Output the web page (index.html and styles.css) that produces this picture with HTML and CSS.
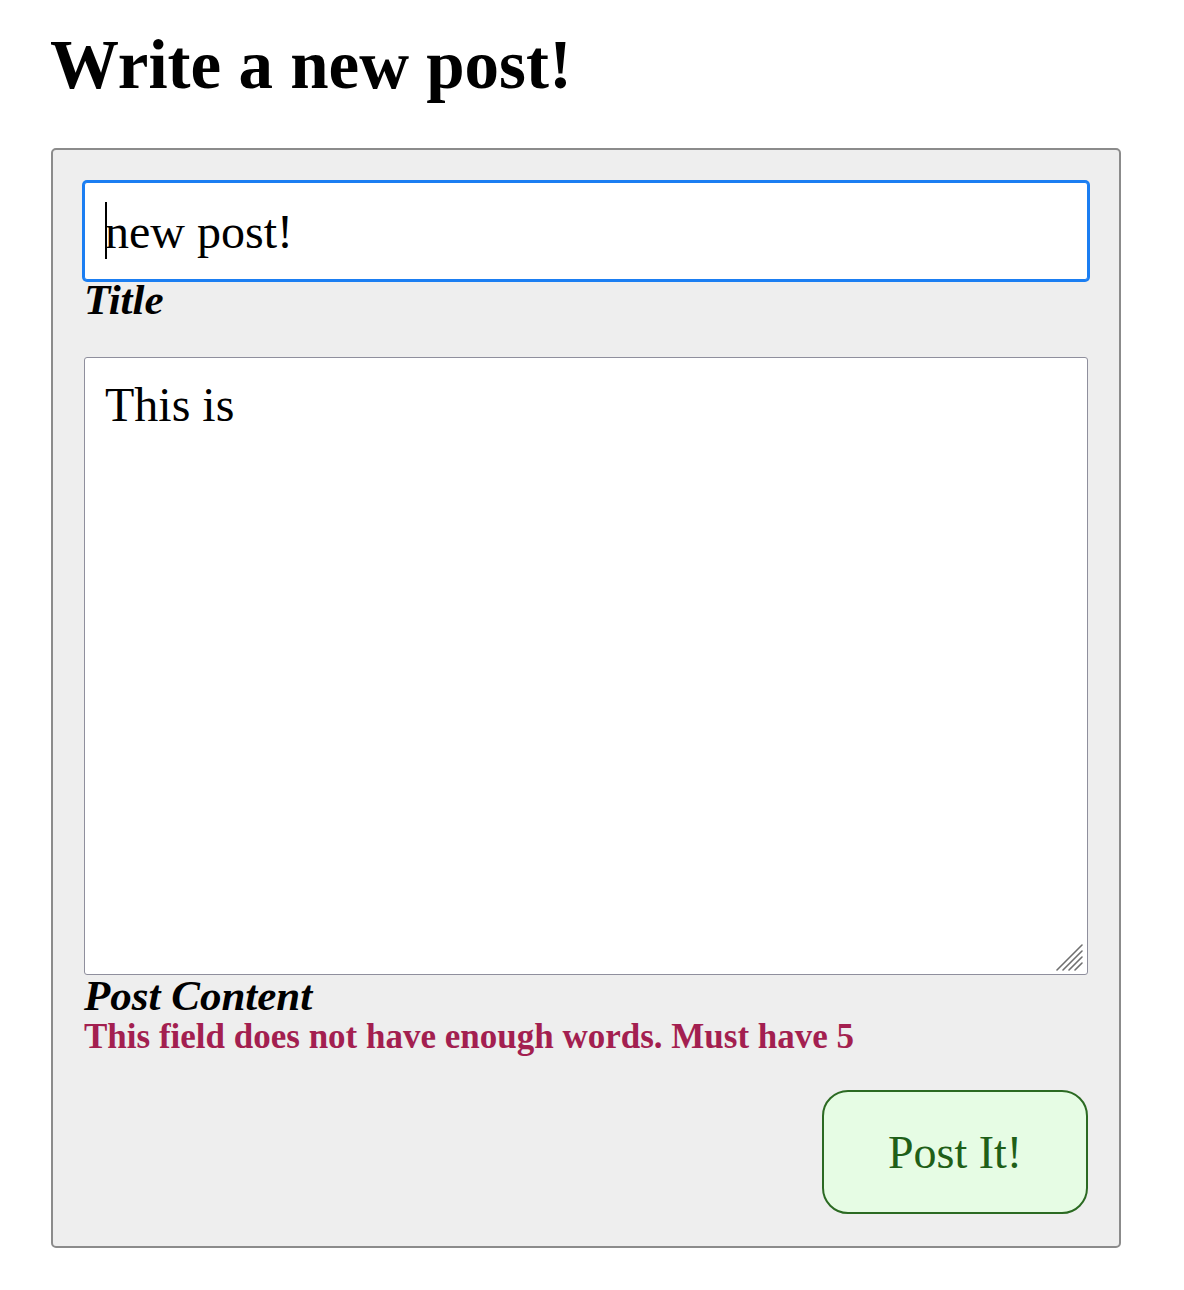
FILE: index.html
```html
<!DOCTYPE html>
<html lang="en">
<head>
<meta charset="utf-8">
<title>Write a new post!</title>
<link rel="stylesheet" href="styles.css">
</head>
<body>
<main class="page">
  <h1 class="page-title">Write a new post!</h1>
  <form class="post-form">
    <div class="field">
      <div class="input-wrap">
        <input class="title-input" id="title" type="text" value="new post!">
        <span class="caret"></span>
      </div>
      <label class="field-label" for="title">Title</label>
    </div>
    <div class="field field-content">
      <div class="textarea-wrap">
        <textarea class="content-input" id="content">This is</textarea>
        <svg class="grip" width="28" height="28" viewBox="0 0 28 28" aria-hidden="true">
          <path d="M2 27 L27 2 M8 27 L27 8 M14 27 L27 14 M20 27 L27 20" stroke="#6f6f6f" stroke-width="1.6" fill="none" stroke-linecap="round"/>
        </svg>
      </div>
      <label class="field-label" for="content">Post Content</label>
      <p class="field-error">This field does not have enough words. Must have 5</p>
    </div>
    <div class="actions">
      <button class="submit-btn" type="button">Post It!</button>
    </div>
  </form>
</main>
</body>
</html>
```

FILE: styles.css
```css
html, body {
  margin: 0;
  padding: 0;
  background: #ffffff;
}

body {
  font-family: "Liberation Serif", "Times New Roman", serif;
  color: #000;
}

.page {
  padding: 26px 63px 40px 50px;
}

.page-title {
  margin: 0 0 43px 0;
  font-size: 69px;
  font-weight: 700;
  line-height: normal;
}

.post-form {
  background: #eeeeee;
  border: 2px solid #8b8b8b;
  border-radius: 5px;
  margin-left: 1px;
  padding: 32px 31px 32px 31px;
  display: flex;
  flex-direction: column;
}

.field {
  display: flex;
  flex-direction: column;
}

.field-content {
  margin-top: 37px;
}

.input-wrap,
.textarea-wrap {
  position: relative;
}

.title-input {
  box-sizing: border-box;
  display: block;
  width: 100%;
  height: 98px;
  margin: 0;
  padding: 0 20px;
  font-family: inherit;
  font-size: 48px;
  color: #000;
  background: #fff;
  border: 1px solid #1b7ef2;
  border-radius: 3px;
  box-shadow: 0 0 0 2px #1b7ef2;
  outline: none;
}

.caret {
  position: absolute;
  left: 21px;
  top: 20px;
  width: 2px;
  height: 57px;
  background: #000;
}

.content-input {
  box-sizing: border-box;
  display: block;
  width: 100%;
  height: 618px;
  margin: 0;
  padding: 19px 20px;
  font-family: inherit;
  font-size: 48px;
  line-height: normal;
  color: #000;
  background: #fff;
  border: 1px solid #8f8f9d;
  border-radius: 3px;
  resize: none;
}

.grip {
  position: absolute;
  right: 5px;
  bottom: 4px;
}

.field-label {
  display: block;
  font-size: 43px;
  font-weight: 700;
  font-style: italic;
  line-height: 40px;
}

.content-input + .field-label,
.textarea-wrap + .field-label {
  margin-top: 1px;
}

.field-error {
  margin: 4px 0 0 0;
  font-size: 35px;
  font-weight: 700;
  line-height: 33px;
  color: #a31f50;
}

.actions {
  display: flex;
  justify-content: flex-end;
  margin-top: 37px;
}

.submit-btn {
  box-sizing: border-box;
  width: 266px;
  height: 124px;
  margin: 0;
  padding: 0;
  font-family: inherit;
  font-size: 46px;
  color: #1f5f18;
  background: #e6fce4;
  border: 2px solid #2b6a22;
  border-radius: 26px;
  cursor: pointer;
}
```
